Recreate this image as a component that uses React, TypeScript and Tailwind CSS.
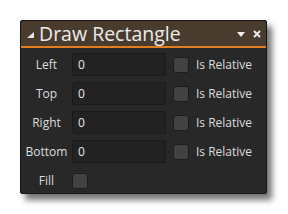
import React from "react";

const font = { fontFamily: '"Open Sans", "Noto Sans", sans-serif' };

function Row({ label }: { label: string }) {
  return (
    <div className="flex items-center h-[23px]">
      <div className="w-[51px] text-center text-[12px] text-[#dedede]">{label}</div>
      <div className="w-[94px] h-[23px] bg-[#222222] border border-[#1a1a1a] rounded-[2px] flex items-center pl-[5px] text-[12px] text-[#e6e6e6]">
        0
      </div>
      <div className="ml-[7px] w-[16px] h-[16px] rounded-[3px] bg-[#424242] border border-[#1c1c1c]" />
      <div className="ml-[7px] text-[12px] text-[#dedede]">Is Relative</div>
    </div>
  );
}

export default function App() {
  return (
    <div className="w-[288px] h-[214px] bg-white relative" style={font}>
      <div className="absolute left-[20px] top-[20px] w-[247px] h-[174px] bg-[#282828] border border-[#151515] rounded-[2px] shadow-[5px_6px_6px_rgba(0,0,0,0.55)] flex flex-col">
        <div className="h-[25px] bg-[#4a3b2f] flex items-center rounded-t-[2px]">
          <svg width="7" height="6" viewBox="0 0 7 6" className="ml-[6px] mt-[3px]">
            <polygon points="0,6 7,6 7,0" fill="#e8e8e8" />
          </svg>
          <span className="ml-[5px] text-[19.5px] leading-none text-[#ececec]">Draw Rectangle</span>
          <div className="flex-1" />
          <svg width="8" height="5" viewBox="0 0 8 5" className="mt-[1px]">
            <polygon points="0,0 8,0 4,5" fill="#f0f0f0" />
          </svg>
          <svg width="8" height="8" viewBox="0 0 8 8" className="ml-[8px] mr-[5px]">
            <path d="M1 1 L7 7 M7 1 L1 7" stroke="#f0f0f0" strokeWidth="1.8" />
          </svg>
        </div>
        <div className="h-[2px] bg-[#e07d1f]" />
        <div className="flex flex-col gap-[6px] pt-[5px]">
          <Row label="Left" />
          <Row label="Top" />
          <Row label="Right" />
          <Row label="Bottom" />
          <div className="flex items-center h-[23px]">
            <div className="w-[51px] text-center text-[12px] text-[#dedede]">Fill</div>
            <div className="w-[16px] h-[16px] rounded-[3px] bg-[#424242] border border-[#1c1c1c]" />
          </div>
        </div>
      </div>
    </div>
  );
}
